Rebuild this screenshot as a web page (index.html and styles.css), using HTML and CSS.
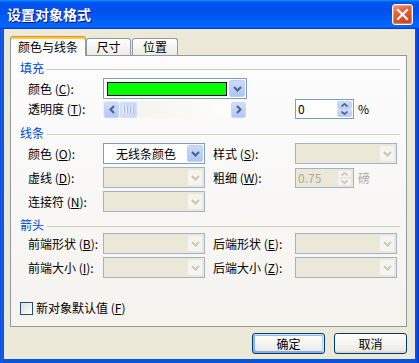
FILE: index.html
```html
<!DOCTYPE html>
<html lang="zh-CN">
<head>
<meta charset="utf-8">
<title>设置对象格式</title>
<link rel="stylesheet" href="styles.css">
</head>
<body>
<div class="window">
  <div class="titlebar">
    <span class="title">设置对象格式</span>
    <span class="close"><svg width="19" height="19" viewBox="0 0 19 19"><path d="M5 5 L14 14 M14 5 L5 14" stroke="#fff" stroke-width="2.2" stroke-linecap="square" fill="none"/></svg></span>
  </div>
  <div class="client">
    <div class="tabs">
      <div class="tab active t1">颜色与线条</div>
      <div class="tab t2">尺寸</div>
      <div class="tab t3">位置</div>
    </div>
    <div class="panel">
      <div class="legend l1">填充</div>
      <div class="row r-c">
        <span class="lbl">颜色 (<u>C</u>):</span>
        <div class="combo wide">
          <div class="val"><span class="swatch"></span></div>
          <span class="ddbtn"><svg width="9" height="6" viewBox="0 0 9 6"><path d="M1 1 L4.5 4.5 L8 1" stroke="#4d6185" stroke-width="2" fill="none"/></svg></span>
        </div>
      </div>
      <div class="row r-t">
        <span class="lbl">透明度 (<u>T</u>):</span>
        <div class="scroll">
          <span class="sbtn"><svg width="6" height="9" viewBox="0 0 6 9"><path d="M5 1 L1.5 4.5 L5 8" stroke="#4d6185" stroke-width="2" fill="none"/></svg></span>
          <span class="thumb"><i></i><i></i><i></i><i></i></span>
          <span class="track"></span>
          <span class="sbtn"><svg width="6" height="9" viewBox="0 0 6 9"><path d="M1 1 L4.5 4.5 L1 8" stroke="#4d6185" stroke-width="2" fill="none"/></svg></span>
        </div>
        <div class="spin sp-t">
          <span class="v">0</span>
          <span class="spinbtns">
            <span><svg width="7" height="4" viewBox="0 0 7 4"><path d="M0.5 3.5 L3.5 0.8 L6.5 3.5" stroke="#4d6185" stroke-width="1.6" fill="none"/></svg></span>
            <span><svg width="7" height="4" viewBox="0 0 7 4"><path d="M0.5 0.5 L3.5 3.2 L6.5 0.5" stroke="#4d6185" stroke-width="1.6" fill="none"/></svg></span>
          </span>
        </div>
        <span class="unit">%</span>
      </div>

      <div class="legend l2">线条</div>
      <div class="row r-1">
        <span class="lbl">颜色 (<u>O</u>):</span>
        <div class="combo">
          <div class="val">无线条颜色</div>
          <span class="ddbtn"><svg width="9" height="6" viewBox="0 0 9 6"><path d="M1 1 L4.5 4.5 L8 1" stroke="#4d6185" stroke-width="2" fill="none"/></svg></span>
        </div>
        <span class="lbl lbl2">样式 (<u>S</u>):</span>
        <div class="combo disabled">
          <div class="val"></div>
          <span class="ddbtn"><svg width="9" height="6" viewBox="0 0 9 6"><path d="M1 1 L4.5 4.5 L8 1" stroke="#c9c7ba" stroke-width="2" fill="none"/></svg></span>
        </div>
      </div>
      <div class="row">
        <span class="lbl">虚线 (<u>D</u>):</span>
        <div class="combo disabled">
          <div class="val"></div>
          <span class="ddbtn"><svg width="9" height="6" viewBox="0 0 9 6"><path d="M1 1 L4.5 4.5 L8 1" stroke="#c9c7ba" stroke-width="2" fill="none"/></svg></span>
        </div>
        <span class="lbl lbl2">粗细 (<u>W</u>):</span>
        <div class="spin disabled">
          <span class="v">0.75</span>
          <span class="spinbtns">
            <span><svg width="7" height="4" viewBox="0 0 7 4"><path d="M0.5 3.5 L3.5 0.8 L6.5 3.5" stroke="#c9c7ba" stroke-width="1.6" fill="none"/></svg></span>
            <span><svg width="7" height="4" viewBox="0 0 7 4"><path d="M0.5 0.5 L3.5 3.2 L6.5 0.5" stroke="#c9c7ba" stroke-width="1.6" fill="none"/></svg></span>
          </span>
        </div>
        <span class="unit gray">磅</span>
      </div>
      <div class="row">
        <span class="lbl">连接符 (<u>N</u>):</span>
        <div class="combo disabled">
          <div class="val"></div>
          <span class="ddbtn"><svg width="9" height="6" viewBox="0 0 9 6"><path d="M1 1 L4.5 4.5 L8 1" stroke="#c9c7ba" stroke-width="2" fill="none"/></svg></span>
        </div>
      </div>

      <div class="legend l3">箭头</div>
      <div class="row r-a">
        <span class="lbl">前端形状 (<u>B</u>):</span>
        <div class="combo disabled">
          <div class="val"></div>
          <span class="ddbtn"><svg width="9" height="6" viewBox="0 0 9 6"><path d="M1 1 L4.5 4.5 L8 1" stroke="#c9c7ba" stroke-width="2" fill="none"/></svg></span>
        </div>
        <span class="lbl lbl2">后端形状 (<u>E</u>):</span>
        <div class="combo disabled">
          <div class="val"></div>
          <span class="ddbtn"><svg width="9" height="6" viewBox="0 0 9 6"><path d="M1 1 L4.5 4.5 L8 1" stroke="#c9c7ba" stroke-width="2" fill="none"/></svg></span>
        </div>
      </div>
      <div class="row">
        <span class="lbl">前端大小 (<u>I</u>):</span>
        <div class="combo disabled">
          <div class="val"></div>
          <span class="ddbtn"><svg width="9" height="6" viewBox="0 0 9 6"><path d="M1 1 L4.5 4.5 L8 1" stroke="#c9c7ba" stroke-width="2" fill="none"/></svg></span>
        </div>
        <span class="lbl lbl2">后端大小 (<u>Z</u>):</span>
        <div class="combo disabled">
          <div class="val"></div>
          <span class="ddbtn"><svg width="9" height="6" viewBox="0 0 9 6"><path d="M1 1 L4.5 4.5 L8 1" stroke="#c9c7ba" stroke-width="2" fill="none"/></svg></span>
        </div>
      </div>

      <label class="check"><span class="box"></span>新对象默认值 (<u>F</u>)</label>
    </div>
    <div class="actions">
      <span class="btn default">确定</span>
      <span class="btn">取消</span>
    </div>
  </div>
</div>
</body>
</html>
```
FILE: styles.css
```css
* { box-sizing: border-box; }
html, body { margin: 0; padding: 0; }
body {
  width: 419px;
  height: 363px;
  overflow: hidden;
  font-family: "Noto Sans CJK SC", "Noto Sans", sans-serif;
  font-size: 12px;
  color: #000;
  background: #0a52e0;
}
u { text-decoration: underline; text-underline-offset: 1px; }

.window {
  width: 419px;
  height: 363px;
  display: flex;
  flex-direction: column;
  background: linear-gradient(90deg, #0831d9 0, #166aee 1px, #0855dd 3px, #0855dd calc(100% - 3px), #0831d9 100%);
}

.titlebar {
  height: 29px;
  flex: none;
  display: flex;
  align-items: center;
  justify-content: space-between;
  padding: 0 6px 1px 7px;
  background: linear-gradient(180deg, #0997ff 0, #0053ee 8%, #0050ee 40%, #0066ff 88%, #0066ff 93%, #005bff 95%, #003dd7 96%, #003dd7 100%);
}
.title {
  color: #fff;
  font-weight: bold;
  font-size: 14px;
  line-height: 16px;
  text-shadow: 1px 1px #0f1089;
}
.close {
  width: 21px;
  height: 21px;
  border: 1px solid #fff;
  border-radius: 3px;
  background: linear-gradient(160deg, #f09a7c 0, #e2623f 35%, #d94c22 70%, #c23d16 100%);
  box-shadow: inset 0 0 1px 1px rgba(255, 200, 180, 0.5);
  display: flex;
  align-items: center;
  justify-content: center;
}

.client {
  flex: 1;
  margin: 0 4px 4px;
  background: #ece9d8;
  padding: 7px 8px 0 6px;
  display: flex;
  flex-direction: column;
}

.tabs {
  display: flex;
  align-items: flex-end;
  height: 19px;
  flex: none;
}
.tab {
  height: 17px;
  border: 1px solid #919b9c;
  border-bottom: none;
  border-radius: 3px 3px 0 0;
  background: linear-gradient(180deg, #fff 0, #f3f3ef 60%, #ecebe6 100%);
  display: flex;
  align-items: center;
  justify-content: center;
  line-height: 14px;
}
.tab.active {
  height: 20px;
  margin-bottom: -1px;
  border-top: 1px solid #e68b2c;
  box-shadow: inset 0 2px 0 #ffc83c;
  background: #fcfcfe;
  padding-top: 1px;
  position: relative;
  z-index: 1;
}
.t1 { width: 76px; }
.t2 { width: 45px; margin-left: 0; }
.t3 { width: 46px; margin-left: 1px; }

.panel {
  height: 272px;
  flex: none;
  border: 1px solid #919b9c;
  background: linear-gradient(180deg, #fcfcfe 0, #f4f3ee 100%);
  display: flex;
  flex-direction: column;
}

.legend {
  display: flex;
  align-items: center;
  height: 14px;
  margin: 0 6px 0 9px;
  color: #0046d5;
  line-height: 14px;
}
.legend::after {
  content: "";
  flex: 1;
  border-top: 1px solid #d0d0bf;
  margin-left: 3px;
  margin-top: 2px;
}
.l1 { margin-top: 5px; }
.l2 { margin-top: 7px; }
.l3 { margin-top: 6px; }

.row {
  display: flex;
  align-items: center;
  height: 21px;
  padding-left: 17px;
  margin-top: 3px;
  flex: none;
}
.r-t { height: 20px; margin-top: 0; }
.r-a { margin-top: 1px; }

.lbl {
  width: 75px;
  flex: none;
  white-space: nowrap;
  line-height: 14px;
}
.lbl2 { width: 82px; margin-left: 8px; }

.combo {
  width: 102px;
  height: 21px;
  flex: none;
  border: 1px solid #7f9db9;
  background: #fff;
  display: flex;
  padding: 1px;
}
.combo.wide { width: 144px; }
.combo .val {
  flex: 1;
  display: flex;
  align-items: center;
  justify-content: center;
  line-height: 14px;
}
.swatch {
  display: block;
  width: 120px;
  height: 14px;
  margin-left: 2px;
  margin-right: 2px;
  border: 1px solid #000;
  background: #00ff00;
}
.ddbtn {
  width: 16px;
  flex: none;
  border: 1px solid #bccffb;
  border-radius: 2px;
  background: linear-gradient(180deg, #cbdafc 0, #b9cdf9 60%, #adc4f7 100%);
  display: flex;
  align-items: center;
  justify-content: center;
}
.combo.disabled {
  border-color: #a1b3cb;
  background: #ebe8d7;
}
.combo.disabled .ddbtn {
  border-color: #eae8df;
  background: #f5f4ef;
}

.scroll {
  width: 144px;
  height: 17px;
  flex: none;
  display: flex;
  padding: 1px 1px 0;
  background: linear-gradient(90deg, #f3f1ec 0, #fefefb 100%);
}
.sbtn {
  width: 15px;
  height: 16px;
  flex: none;
  border: 1px solid #c6d5fc;
  border-radius: 2px;
  background: linear-gradient(180deg, #d0ddfc 0, #bcd0fa 60%, #b3c8f7 100%);
  display: flex;
  align-items: center;
  justify-content: center;
}
.thumb {
  width: 17px;
  height: 16px;
  flex: none;
  margin-left: 1px;
  border: 1px solid #d4def6;
  border-radius: 2px;
  background: linear-gradient(90deg, #d5dff8 0, #c9d6f7 100%);
  display: flex;
  align-items: center;
  justify-content: center;
  gap: 1px;
}
.thumb i {
  display: block;
  width: 1px;
  height: 7px;
  background: #eef2fd;
  box-shadow: 1px 0 #a9b9e0;
  margin-right: 1px;
}
.track { flex: 1; }

.spin {
  width: 59px;
  height: 20px;
  flex: none;
  border: 1px solid #7f9db9;
  background: #fff;
  display: flex;
  padding: 1px;
}
.sp-t { margin-left: 48px; }
.spin .v {
  flex: 1;
  display: flex;
  align-items: center;
  padding-left: 1px;
  line-height: 14px;
}
.spinbtns {
  width: 15px;
  flex: none;
  display: flex;
  flex-direction: column;
}
.spinbtns span {
  flex: 1;
  display: flex;
  align-items: center;
  justify-content: center;
  border: 1px solid #c2d2fb;
  border-radius: 2px;
  background: linear-gradient(180deg, #d0ddfc 0, #b7cbf8 100%);
}
.spin.disabled {
  border-color: #a1b3cb;
  background: #ebe8d7;
  color: #aca899;
}
.spin.disabled .spinbtns span {
  border-color: #eae8df;
  background: #f5f4ef;
}
.unit { margin-left: 4px; line-height: 14px; }
.gray { color: #aca899; }

.check {
  display: flex;
  align-items: center;
  height: 14px;
  margin: 23px 0 0 9px;
  line-height: 14px;
}
.box {
  width: 13px;
  height: 13px;
  flex: none;
  border: 1px solid #1c5180;
  background: linear-gradient(135deg, #dcdcd7 0, #ffffff 100%);
  margin-right: 3px;
}

.actions {
  display: flex;
  justify-content: flex-end;
  gap: 9px;
  margin-top: 6px;
}
.btn {
  width: 73px;
  height: 21px;
  border: 1px solid #003c74;
  border-radius: 3px;
  background: linear-gradient(180deg, #fff 0, #ecebe6 86%, #d6d0c5 100%);
  display: flex;
  align-items: center;
  justify-content: center;
  line-height: 14px;
}
.btn.default {
  box-shadow: inset -1px 1px #cee7ff, inset 1px 2px #98b8ea, inset -2px 2px #bcd4f6, inset 1px -1px #89ade4, inset 2px -2px #89ade4;
}
```
